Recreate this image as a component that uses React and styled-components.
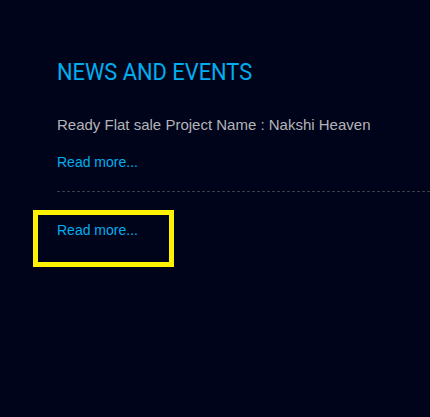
import React from "react";
import styled, { createGlobalStyle } from "styled-components";

const GlobalStyle = createGlobalStyle`
  html, body {
    margin: 0;
    padding: 0;
    background: #00041a;
  }
`;

const Page = styled("div")`
  position: relative;
  width: 430px;
  height: 417px;
  background: #00041a;
  overflow: hidden;
`;

const Section = styled("section")`
  padding: 58px 0 0 57px;
`;

const Heading = styled("h2")`
  margin: 0 0 29px;
  font-family: "Roboto", "Liberation Sans", sans-serif;
  font-weight: 400;
  font-size: 24px;
  line-height: 28px;
  color: #00aeef;
  transform: scaleX(0.91);
  transform-origin: left center;
`;

const NewsItem = styled("div")`
  padding-bottom: ${({ last }) => (last ? "0" : "20px")};
  margin-bottom: ${({ last }) => (last ? "0" : "29px")};
  border-bottom: ${({ last }) => (last ? "none" : "1px dashed #3c3c48")};
`;

const Summary = styled("p")`
  margin: 0 0 18px;
  font-family: "Liberation Sans", Arial, sans-serif;
  font-size: 15px;
  line-height: 20px;
  color: #b4b4b8;
`;

const ReadMore = styled("a")`
  font-family: "Liberation Sans", Arial, sans-serif;
  font-size: 14px;
  line-height: 18px;
  color: #00aeef;
  text-decoration: none;
`;

const Highlight = styled("div")`
  position: absolute;
  left: 33px;
  top: 210px;
  width: 141px;
  height: 57px;
  box-sizing: border-box;
  border: 5px solid #fff200;
  pointer-events: none;
`;

export default function App() {
  return (
    <Page>
      <GlobalStyle />
      <Section>
        <Heading>NEWS AND EVENTS</Heading>
        <NewsItem>
          <Summary>Ready Flat sale Project Name : Nakshi Heaven</Summary>
          <ReadMore href="#">Read more...</ReadMore>
        </NewsItem>
        <NewsItem last>
          <ReadMore href="#">Read more...</ReadMore>
        </NewsItem>
      </Section>
      <Highlight />
    </Page>
  );
}
